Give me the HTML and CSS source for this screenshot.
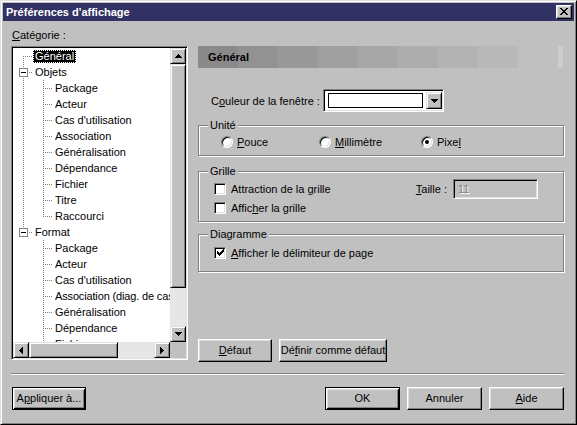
FILE: index.html
```html
<!DOCTYPE html>
<html lang="fr">
<head>
<meta charset="utf-8">
<title>Préférences d'affichage</title>
<link rel="stylesheet" href="styles.css">
</head>
<body>
<div class="window">
  <div class="titlebar">
    <span class="title">Préférences d'affichage</span>
    <span class="close">
      <svg width="8" height="7" viewBox="0 0 8 7" shape-rendering="crispEdges" fill="#000">
        <rect x="0" y="0" width="2" height="1"/><rect x="6" y="0" width="2" height="1"/>
        <rect x="1" y="1" width="2" height="1"/><rect x="5" y="1" width="2" height="1"/>
        <rect x="2" y="2" width="4" height="1"/>
        <rect x="3" y="3" width="2" height="1"/>
        <rect x="2" y="4" width="4" height="1"/>
        <rect x="1" y="5" width="2" height="1"/><rect x="5" y="5" width="2" height="1"/>
        <rect x="0" y="6" width="2" height="1"/><rect x="6" y="6" width="2" height="1"/>
      </svg>
    </span>
  </div>
  <div class="body">
    <div class="main">
      <div class="left">
        <div class="cat-label"><u>C</u>atégorie :</div>
        <div class="tree">
          <div class="tree-view">
            <div class="row"><span class="cell first"></span><span class="label sel">Général</span></div>
            <div class="row"><span class="cell tee"><span class="exp"></span></span><span class="label">Objets</span></div>
            <div class="row"><span class="cell pipe"></span><span class="cell tee"></span><span class="label">Package</span></div>
            <div class="row"><span class="cell pipe"></span><span class="cell tee"></span><span class="label">Acteur</span></div>
            <div class="row"><span class="cell pipe"></span><span class="cell tee"></span><span class="label">Cas d'utilisation</span></div>
            <div class="row"><span class="cell pipe"></span><span class="cell tee"></span><span class="label">Association</span></div>
            <div class="row"><span class="cell pipe"></span><span class="cell tee"></span><span class="label">Généralisation</span></div>
            <div class="row"><span class="cell pipe"></span><span class="cell tee"></span><span class="label">Dépendance</span></div>
            <div class="row"><span class="cell pipe"></span><span class="cell tee"></span><span class="label">Fichier</span></div>
            <div class="row"><span class="cell pipe"></span><span class="cell tee"></span><span class="label">Titre</span></div>
            <div class="row"><span class="cell pipe"></span><span class="cell ell"></span><span class="label">Raccourci</span></div>
            <div class="row"><span class="cell ell"><span class="exp"></span></span><span class="label">Format</span></div>
            <div class="row"><span class="cell"></span><span class="cell tee"></span><span class="label">Package</span></div>
            <div class="row"><span class="cell"></span><span class="cell tee"></span><span class="label">Acteur</span></div>
            <div class="row"><span class="cell"></span><span class="cell tee"></span><span class="label">Cas d'utilisation</span></div>
            <div class="row"><span class="cell"></span><span class="cell tee"></span><span class="label narrow">Association (diag. de cas d'utilisation)</span></div>
            <div class="row"><span class="cell"></span><span class="cell tee"></span><span class="label">Généralisation</span></div>
            <div class="row"><span class="cell"></span><span class="cell tee"></span><span class="label">Dépendance</span></div>
            <div class="row"><span class="cell"></span><span class="cell tee"></span><span class="label">Fichier</span></div>
          </div>
          <div class="vscroll">
            <div class="sbtn"><svg width="7" height="4" viewBox="0 0 7 4" shape-rendering="crispEdges"><path d="M3 0h1v1h1v1h1v1h1v1H0V3h1V2h1V1h1z" fill="#000"/></svg></div>
            <div class="thumb-v"></div>
            <div class="track"></div>
            <div class="sbtn"><svg width="7" height="4" viewBox="0 0 7 4" shape-rendering="crispEdges"><path d="M0 0h7v1H6v1H5v1H4v1H3V3H2V2H1V1H0z" fill="#000"/></svg></div>
          </div>
          <div class="hscroll">
            <div class="sbtn"><svg width="4" height="7" viewBox="0 0 4 7" shape-rendering="crispEdges"><path d="M3 0h1v7H3V6H2V5H1V4H0V3h1V2h1V1h1z" fill="#000"/></svg></div>
            <div class="thumb-h"></div>
            <div class="track"></div>
            <div class="sbtn"><svg width="4" height="7" viewBox="0 0 4 7" shape-rendering="crispEdges"><path d="M0 0h1v1h1v1h1v1h1v1H3v1H2v1H1v1H0z" fill="#000"/></svg></div>
          </div>
          <div class="corner"></div>
        </div>
      </div>
      <div class="right">
        <div class="header">
          <div class="band">Général</div>
          <div class="strip"></div>
        </div>
        <div class="color-row">
          <span class="color-label">C<u>o</u>uleur de la fenêtre :</span>
          <div class="combo">
            <div class="swatch"></div>
            <div class="drop"><svg width="7" height="4" viewBox="0 0 7 4" shape-rendering="crispEdges"><path d="M0 0h7v1H6v1H5v1H4v1H3V3H2V2H1V1H0z" fill="#000"/></svg></div>
          </div>
        </div>
        <div class="group unite">
          <div class="legend">Unité</div>
          <div class="radios">
            <div class="opt opt-1"><span class="radio"></span><span><u>P</u>ouce</span></div>
            <div class="opt opt-2"><span class="radio"></span><span><u>M</u>illimètre</span></div>
            <div class="opt"><span class="radio on"><span class="dot"></span></span><span>Pixe<u>l</u></span></div>
          </div>
        </div>
        <div class="group grille">
          <div class="legend">Grille</div>
          <div class="g-row first">
            <div class="opt"><span class="check"></span><span>Attraction de la grille</span></div>
            <div class="taille">
              <span class="taille-label"><u>T</u>aille :</span>
              <div class="taille-input">11</div>
            </div>
          </div>
          <div class="g-row second">
            <div class="opt"><span class="check"></span><span>Affic<u>h</u>er la grille</span></div>
          </div>
        </div>
        <div class="group diagramme">
          <div class="legend">Diagramme</div>
          <div class="d-row">
            <div class="opt"><span class="check"><svg width="7" height="7" viewBox="0 0 7 7" shape-rendering="crispEdges"><path d="M6 0h1v3H6v1H5v1H4v1H3v1H2V6H1V5H0V2h1v1h1v1h1V3h1V2h1V1h1z" fill="#000"/></svg></span><span><u>A</u>fficher le délimiteur de page</span></div>
          </div>
        </div>
        <div class="def-row">
          <button class="btn w-def"><u>D</u>éfaut</button>
          <button class="btn w-set">Dé<u>f</u>inir comme défaut</button>
        </div>
      </div>
    </div>
    <div class="sep"></div>
    <div class="bottom">
      <button class="btn default w-apply">A<u>p</u>pliquer à...</button>
      <div class="actions">
        <button class="btn default w-act">OK</button>
        <button class="btn w-act">Annuler</button>
        <button class="btn w-act"><u>A</u>ide</button>
      </div>
    </div>
  </div>
</div>
</body>
</html>
```
FILE: styles.css
```css
* { box-sizing: border-box; }
html, body { margin: 0; padding: 0; }
body {
  background: #c0c0c0;
  font-family: "Liberation Sans", Arial, sans-serif;
  font-size: 11px;
  color: #000;
}
u { text-decoration: underline; text-underline-offset: 1px; }

.window {
  width: 577px;
  height: 425px;
  background: #c0c0c0;
  border: 1px solid;
  border-color: #dfdfdf #000 #000 #dfdfdf;
  box-shadow: inset 1px 1px #fff, inset -1px -1px #808080;
  padding: 2px;
  display: flex;
  flex-direction: column;
}

.titlebar {
  height: 18px;
  flex: none;
  background: #313163;
  display: flex;
  align-items: center;
  justify-content: space-between;
  padding: 0 2px 0 3px;
}
.title { color: #fff; font-weight: bold; font-size: 11px; }
.close {
  width: 16px;
  height: 14px;
  background: #c0c0c0;
  border: 1px solid;
  border-color: #fff #000 #000 #fff;
  box-shadow: inset -1px -1px #808080, inset 1px 1px #dfdfdf;
  display: flex;
  align-items: center;
  justify-content: center;
  padding-bottom: 1px;
}

.body {
  flex: 1;
  padding: 8px 10px 0 8px;
  display: flex;
  flex-direction: column;
}
.main { height: 333px; flex: none; display: flex; gap: 10px; }

/* left column */
.left { width: 177px; flex: none; display: flex; flex-direction: column; }
.cat-label { height: 13px; line-height: 13px; padding-left: 1px; }
.tree {
  margin-top: 4px;
  height: 314px;
  border: 1px solid;
  border-color: #808080 #fff #fff #808080;
  box-shadow: inset 1px 1px #000, inset -1px -1px #dfdfdf;
  padding: 1px;
  display: grid;
  grid-template-columns: 157px 16px;
  grid-template-rows: 294px 16px;
}
.tree-view { background: #fff; overflow: hidden; }
.row { height: 16px; display: flex; align-items: flex-start; white-space: nowrap; }
.cell { width: 20px; height: 16px; flex: none; display: flex; }
.cell.tee {
  background:
    repeating-linear-gradient(to bottom, #808080 0 1px, transparent 1px 2px) 10px 0 / 1px 16px no-repeat,
    repeating-linear-gradient(to right, #808080 0 1px, transparent 1px 2px) 10px 8px / 10px 1px no-repeat;
}
.cell.ell {
  background:
    repeating-linear-gradient(to bottom, #808080 0 1px, transparent 1px 2px) 10px 0 / 1px 9px no-repeat,
    repeating-linear-gradient(to right, #808080 0 1px, transparent 1px 2px) 10px 8px / 10px 1px no-repeat;
}
.cell.first {
  background:
    repeating-linear-gradient(to bottom, #808080 0 1px, transparent 1px 2px) 10px 8px / 1px 8px no-repeat,
    repeating-linear-gradient(to right, #808080 0 1px, transparent 1px 2px) 10px 8px / 10px 1px no-repeat;
}
.cell.pipe {
  background:
    repeating-linear-gradient(to bottom, #808080 0 1px, transparent 1px 2px) 10px 0 / 1px 16px no-repeat;
}
.exp {
  width: 9px;
  height: 9px;
  margin: 4px 0 0 6px;
  border: 1px solid #808080;
  background: linear-gradient(#000, #000) center / 5px 1px no-repeat, #fff;
}
.label {
  height: 13px;
  line-height: 11px;
  margin-top: 2px;
  padding: 0 1px;
  border: 1px solid transparent;
}
.label.narrow { letter-spacing: -0.15px; }
.label.sel { background: #000; color: #fff; border: 1px dotted #fff; }

.sbtn, .thumb-v, .thumb-h, .drop {
  background: #c0c0c0;
  border: 1px solid;
  border-color: #dfdfdf #000 #000 #dfdfdf;
  box-shadow: inset 1px 1px #fff, inset -1px -1px #808080;
}
.vscroll { display: flex; flex-direction: column; background: #e6e6e6; }
.hscroll { display: flex; background: #e6e6e6; }
.sbtn {
  width: 16px;
  height: 16px;
  flex: none;
  display: flex;
  align-items: center;
  justify-content: center;
}
.thumb-v { height: 224px; flex: none; }
.thumb-h { width: 89px; flex: none; }
.track { flex: 1; }
.corner { background: #c0c0c0; }

/* right column */
.right { flex: 1; display: flex; flex-direction: column; padding-top: 17px; }
.header { height: 22px; flex: none; display: flex; }
.band {
  width: 320px;
  padding-left: 10px;
  line-height: 22px;
  font-weight: bold;
  background: linear-gradient(to right,
    #8a8a8a 0 40px, #929292 40px 80px, #999999 80px 120px, #a0a0a0 120px 160px,
    #a7a7a7 160px 200px, #adadad 200px 240px, #b3b3b3 240px 280px, #b9b9b9 280px 320px);
}
.strip {
  width: 5px;
  margin-left: auto;
  margin-right: 1px;
  background: repeating-linear-gradient(to bottom, #d4d4d4 0 1px, #c6c6c6 1px 2px);
}

.color-row { margin-top: 21px; height: 23px; flex: none; display: flex; align-items: center; }
.color-label { width: 125px; flex: none; padding-left: 13px; }
.combo {
  width: 121px;
  height: 23px;
  border: 1px solid;
  border-color: #808080 #fff #fff #808080;
  box-shadow: inset 1px 1px #000, inset -1px -1px #dfdfdf;
  background: #fff;
  padding: 1px;
  display: flex;
  align-items: center;
}
.swatch { width: 95px; height: 15px; margin-left: 3px; border: 1px solid #000; background: #fff; }
.drop {
  margin-left: auto;
  width: 16px;
  height: 17px;
  display: flex;
  align-items: center;
  justify-content: center;
}

.group {
  flex: none;
  border: 1px solid #808080;
  box-shadow: 1px 1px #fff, inset 1px 1px #fff;
}
.legend {
  width: fit-content;
  margin: -7px 0 0 9px;
  padding: 0 2px;
  line-height: 13px;
  height: 13px;
  background: #c0c0c0;
}
.unite { margin-top: 13px; padding-bottom: 5px; }
.grille { margin-top: 15px; padding-bottom: 4px; }
.diagramme { margin-top: 12px; padding-bottom: 10px; }

.radios { margin-top: 2px; height: 16px; display: flex; align-items: center; padding-left: 22px; }
.opt { display: flex; align-items: center; flex: none; }
.opt-1 { width: 98px; }
.opt-2 { width: 102px; }
.radio {
  width: 12px;
  height: 12px;
  flex: none;
  border-radius: 50%;
  background: #fff;
  border: 1px solid;
  border-color: #808080 #fff #fff #808080;
  box-shadow: inset 1px 1px #000, inset -1px -1px #dfdfdf;
  margin-right: 4px;
  display: flex;
  align-items: center;
  justify-content: center;
}
.dot { width: 4px; height: 4px; border-radius: 50%; background: #000; }
.check {
  width: 12px;
  height: 12px;
  flex: none;
  background: #fff;
  border: 1px solid;
  border-color: #808080 #fff #fff #808080;
  box-shadow: inset 1px 1px #000, inset -1px -1px #dfdfdf;
  margin-right: 5px;
  display: flex;
  align-items: center;
  justify-content: center;
}

.g-row { display: flex; align-items: center; padding-left: 15px; padding-right: 25px; }
.g-row.first { margin-top: 1px; height: 20px; justify-content: space-between; }
.g-row.second { height: 18px; }
.taille { display: flex; align-items: center; }
.taille-label { margin-right: 6px; }
.taille-input {
  width: 85px;
  height: 20px;
  border: 1px solid;
  border-color: #808080 #fff #fff #808080;
  box-shadow: inset 1px 1px #000, inset -1px -1px #dfdfdf;
  background: #c0c0c0;
  color: #808080;
  text-shadow: 1px 1px #fff;
  padding-left: 4px;
  line-height: 18px;
}
.d-row { margin-top: 3px; height: 17px; display: flex; align-items: center; padding-left: 15px; }

.def-row { margin-top: auto; height: 23px; flex: none; display: flex; gap: 7px; }

.btn {
  font: inherit;
  color: #000;
  margin: 0;
  padding: 0;
  height: 23px;
  background: #c0c0c0;
  border: 1px solid;
  border-color: #fff #000 #000 #fff;
  box-shadow: inset -1px -1px #808080, inset 1px 1px #dfdfdf;
  text-align: center;
  line-height: 19px;
}
.btn.default {
  border-color: #000;
  box-shadow: inset 1px 1px #fff, inset -1px -1px #000, inset 2px 2px #dfdfdf, inset -2px -2px #808080;
}
.w-def { width: 74px; }
.w-set { width: 108px; }
.w-apply { width: 74px; }
.w-act { width: 75px; }

.sep { margin-top: 11px; height: 2px; flex: none; border-top: 1px solid #808080; border-bottom: 1px solid #fff; }
.bottom { margin-top: 12px; height: 23px; flex: none; display: flex; justify-content: space-between; }
.bottom .w-apply { margin-left: 1px; }
.actions { display: flex; gap: 7px; }
```
